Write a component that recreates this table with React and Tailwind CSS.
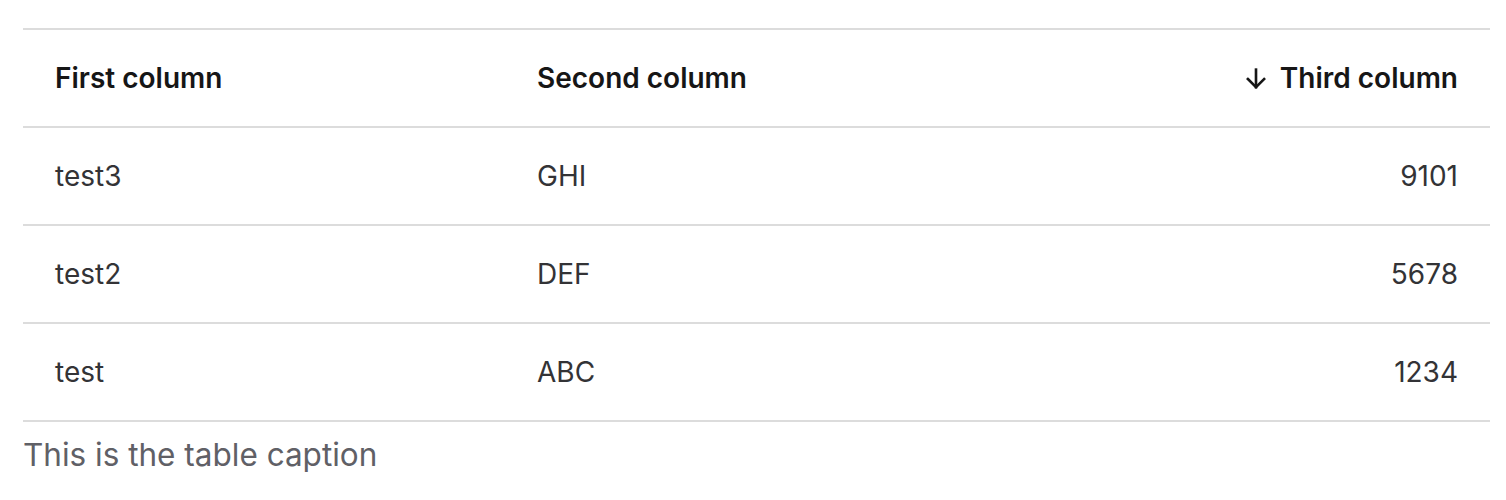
const rows = [
  { first: 'test3', second: 'GHI', third: 9101 },
  { first: 'test2', second: 'DEF', third: 5678 },
  { first: 'test', second: 'ABC', third: 1234 },
];

function ArrowDown() {
  return (
    <svg width="30" height="30" viewBox="0 0 24 24" fill="none" stroke="currentColor" strokeWidth="2.1" strokeLinecap="square" className="inline-block align-[-6px] mr-[9px]">
      <path d="M12 4.5v14" />
      <path d="M5.5 12l6.5 6.5 6.5-6.5" />
    </svg>
  );
}

export default function App() {
  return (
    <div className="bg-white min-h-[500px] pt-[28px] px-[23px]" style={{ fontFamily: 'Inter, "Noto Sans", sans-serif' }}>
      <table className="w-[1467px] border-collapse table-fixed">
        <colgroup>
          <col className="w-[482px]" />
          <col />
          <col className="w-[400px]" />
        </colgroup>
        <thead>
          <tr className="border-t-2 border-b-2 border-[#dcdcdc] h-[98px]">
            <th className="px-8 text-left text-[28px] font-semibold text-[#161616]">First column</th>
            <th className="px-8 text-left text-[28px] font-semibold text-[#161616]">Second column</th>
            <th className="px-8 text-right text-[28px] font-semibold text-[#161616]">
              <ArrowDown />
              Third column
            </th>
          </tr>
        </thead>
        <tbody>
          {rows.map((r) => (
            <tr key={r.first} className="border-b-2 border-[#dcdcdc] h-[98px]">
              <td className="px-8 text-[28px] text-[#333336]">{r.first}</td>
              <td className="px-8 text-[28px] text-[#333336]">{r.second}</td>
              <td className="px-8 text-right text-[28px] text-[#333336]">{r.third}</td>
            </tr>
          ))}
        </tbody>
      </table>
      <p className="text-[31.5px] text-[#606066] mt-[17px] leading-none">This is the table caption</p>
    </div>
  );
}
